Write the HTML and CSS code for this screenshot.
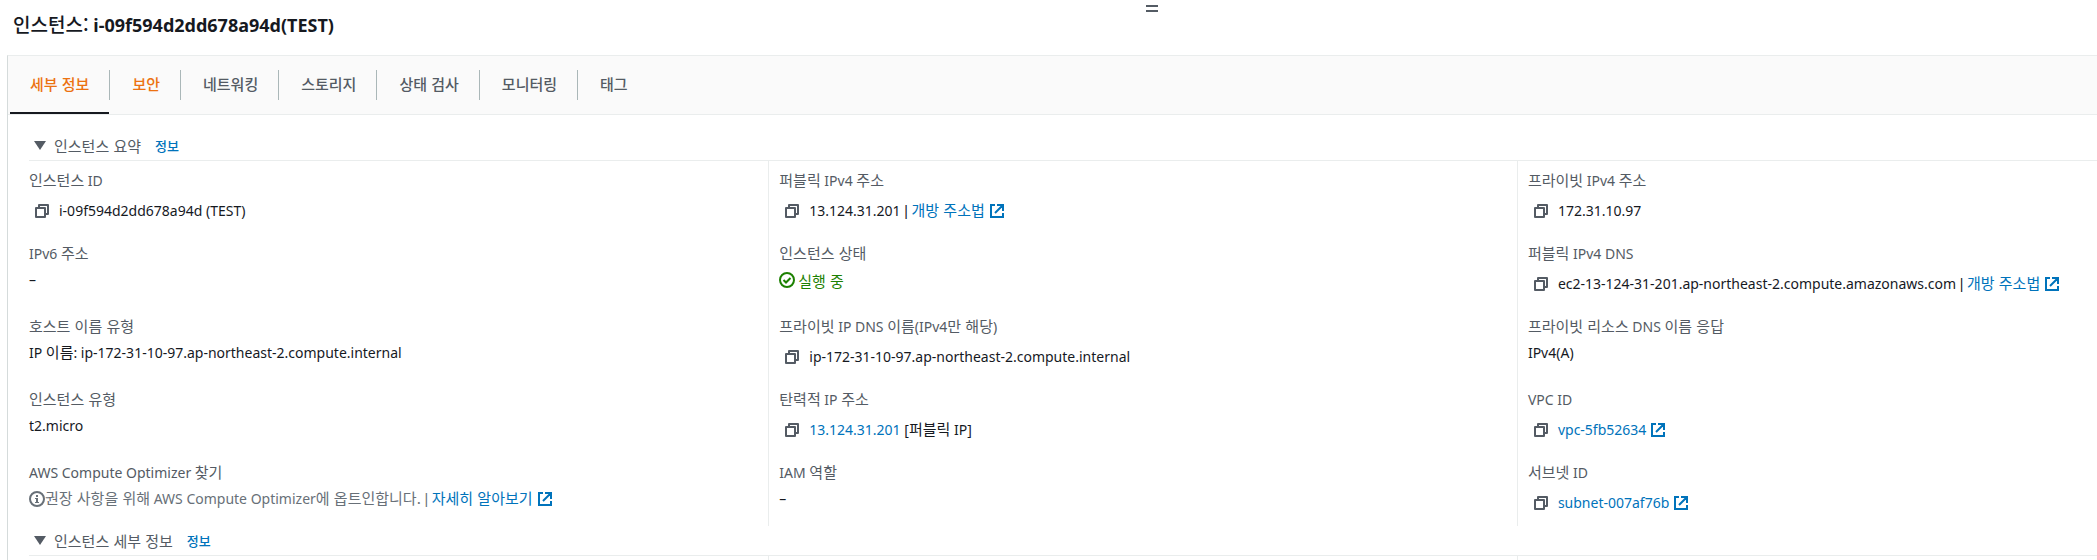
FILE: index.html
```html
<!DOCTYPE html>
<html lang="ko">

<head>
    <meta charset="UTF-8">
    <meta name="viewport" content="width=device-width, initial-scale=1.0">
    <title>인스턴스: i-09f594d2dd678a94d(TEST)</title>
    <link rel="stylesheet" href="styles.css">
</head>

<body>
    <svg class="sprite" aria-hidden="true">
        <symbol id="copy" viewBox="0 0 14 14">
            <path d="M1 4h9v9H1z M4 4V1h9v9h-3" fill="none" stroke="currentColor" stroke-width="2" stroke-linejoin="round" />
        </symbol>
        <symbol id="external" viewBox="0 0 14 14">
            <path d="M5 1H1v12h12V9 M7 1h6v6 M13 1L5 9" fill="none" stroke="currentColor" stroke-width="2" />
        </symbol>
        <symbol id="check" viewBox="0 0 16 16">
            <circle cx="8" cy="8" r="7" fill="none" stroke="currentColor" stroke-width="2" />
            <path d="M4.5 8l2.5 2.5 4.5-4.5" fill="none" stroke="currentColor" stroke-width="2" />
        </symbol>
        <symbol id="info" viewBox="0 0 16 16">
            <circle cx="8" cy="8" r="7" fill="none" stroke="currentColor" stroke-width="2" />
            <path d="M7 4h2v2H7z M6 7h3v4h1v1H6v-1h1V8H6z" fill="currentColor" />
        </symbol>
    </svg>

    <header class="header">
        <h1><span class="ko">인스턴스:</span> i-09f594d2dd678a94d(TEST)</h1>
        <button type="button" class="handle" aria-label="패널 크기 조정"></button>
    </header>

    <main class="panel">
        <nav>
            <ul class="tabs">
                <li><button type="button" class="tab active">세부 정보</button></li>
                <li><button type="button" class="tab new">보안</button></li>
                <li><button type="button" class="tab">네트워킹</button></li>
                <li><button type="button" class="tab">스토리지</button></li>
                <li><button type="button" class="tab">상태 검사</button></li>
                <li><button type="button" class="tab">모니터링</button></li>
                <li><button type="button" class="tab">태그</button></li>
            </ul>
        </nav>

        <section class="section">
            <div class="section-header">
                <button type="button" class="toggle"><span class="arrow"></span>인스턴스 요약</button>
                <a href="#" class="info-link">정보</a>
            </div>
            <div class="columns">
                <dl class="column">
                    <div class="field">
                        <dt><span class="ko">인스턴스</span> ID</dt>
                        <dd class="copyable">
                            <button type="button" class="copy" aria-label="복사"><svg class="icon"><use href="#copy" /></svg></button>
                            <span>i-09f594d2dd678a94d (TEST)</span>
                        </dd>
                    </div>
                    <div class="field">
                        <dt>IPv6 <span class="ko">주소</span></dt>
                        <dd>–</dd>
                    </div>
                    <div class="field">
                        <dt><span class="ko">호스트 이름 유형</span></dt>
                        <dd><span>IP <span class="ko">이름</span>: ip-172-31-10-97.ap-northeast-2.compute.internal</span></dd>
                    </div>
                    <div class="field">
                        <dt><span class="ko">인스턴스 유형</span></dt>
                        <dd>t2.micro</dd>
                    </div>
                    <div class="field">
                        <dt>AWS Compute Optimizer <span class="ko">찾기</span></dt>
                        <dd class="muted">
                            <svg class="icon-lg"><use href="#info" /></svg>
                            <span><span class="ko">권장 사항을 위해</span> AWS Compute Optimizer<span class="ko">에 옵트인합니다.</span> <span class="sep">|</span> <a href="#" class="ko">자세히 알아보기</a></span>
                            <svg class="icon external"><use href="#external" /></svg>
                        </dd>
                    </div>
                </dl>

                <dl class="column">
                    <div class="field">
                        <dt><span class="ko">퍼블릭</span> IPv4 <span class="ko">주소</span></dt>
                        <dd class="copyable">
                            <button type="button" class="copy" aria-label="복사"><svg class="icon"><use href="#copy" /></svg></button>
                            <span>13.124.31.201 <span class="sep">|</span> <a href="#" class="ko">개방 주소법</a></span>
                            <svg class="icon external"><use href="#external" /></svg>
                        </dd>
                    </div>
                    <div class="field">
                        <dt><span class="ko">인스턴스 상태</span></dt>
                        <dd class="running">
                            <svg class="icon-lg"><use href="#check" /></svg>
                            <span class="ko">실행 중</span>
                        </dd>
                    </div>
                    <div class="field">
                        <dt><span class="ko">프라이빗</span> IP DNS <span class="ko">이름</span>(IPv4<span class="ko">만 해당</span>)</dt>
                        <dd class="copyable">
                            <button type="button" class="copy" aria-label="복사"><svg class="icon"><use href="#copy" /></svg></button>
                            <span>ip-172-31-10-97.ap-northeast-2.compute.internal</span>
                        </dd>
                    </div>
                    <div class="field">
                        <dt><span class="ko">탄력적</span> IP <span class="ko">주소</span></dt>
                        <dd class="copyable">
                            <button type="button" class="copy" aria-label="복사"><svg class="icon"><use href="#copy" /></svg></button>
                            <span><a href="#">13.124.31.201</a> [<span class="ko">퍼블릭</span> IP]</span>
                        </dd>
                    </div>
                    <div class="field">
                        <dt>IAM <span class="ko">역할</span></dt>
                        <dd>–</dd>
                    </div>
                </dl>

                <dl class="column">
                    <div class="field">
                        <dt><span class="ko">프라이빗</span> IPv4 <span class="ko">주소</span></dt>
                        <dd class="copyable">
                            <button type="button" class="copy" aria-label="복사"><svg class="icon"><use href="#copy" /></svg></button>
                            <span>172.31.10.97</span>
                        </dd>
                    </div>
                    <div class="field">
                        <dt><span class="ko">퍼블릭</span> IPv4 DNS</dt>
                        <dd class="copyable">
                            <button type="button" class="copy" aria-label="복사"><svg class="icon"><use href="#copy" /></svg></button>
                            <span>ec2-13-124-31-201.ap-northeast-2.compute.amazonaws.com <span class="sep">|</span> <a href="#" class="ko">개방 주소법</a></span>
                            <svg class="icon external"><use href="#external" /></svg>
                        </dd>
                    </div>
                    <div class="field">
                        <dt><span class="ko">프라이빗 리소스</span> DNS <span class="ko">이름 응답</span></dt>
                        <dd>IPv4(A)</dd>
                    </div>
                    <div class="field">
                        <dt>VPC ID</dt>
                        <dd class="copyable">
                            <button type="button" class="copy" aria-label="복사"><svg class="icon"><use href="#copy" /></svg></button>
                            <a href="#">vpc-5fb52634</a>
                            <svg class="icon external"><use href="#external" /></svg>
                        </dd>
                    </div>
                    <div class="field">
                        <dt><span class="ko">서브넷</span> ID</dt>
                        <dd class="copyable">
                            <button type="button" class="copy" aria-label="복사"><svg class="icon"><use href="#copy" /></svg></button>
                            <a href="#">subnet-007af76b</a>
                            <svg class="icon external"><use href="#external" /></svg>
                        </dd>
                    </div>
                </dl>
            </div>
        </section>

        <section class="section last">
            <div class="section-header">
                <button type="button" class="toggle"><span class="arrow"></span>인스턴스 세부 정보</button>
                <a href="#" class="info-link">정보</a>
            </div>
            <div class="columns">
                <div class="column-empty"></div>
                <div class="column-empty"></div>
                <div class="column-empty"></div>
            </div>
        </section>
    </main>
</body>

</html>
```

FILE: styles.css
```css
* {
    padding: 0;
    margin: 0;
    box-sizing: border-box;
}

body {
    min-height: 100vh;
    display: flex;
    flex-direction: column;
    font-family: "Noto Sans", "Noto Sans CJK KR", sans-serif;
    font-size: 14px;
    line-height: 22px;
    color: #16191f;
    background-color: #fff;
}

button {
    border: none;
    background: none;
    font: inherit;
    color: inherit;
    cursor: pointer;
}

a {
    color: #0073bb;
    text-decoration: none;
}

a:hover {
    text-decoration: underline;
}

ul {
    list-style: none;
}

/* Hangul is set one size up so it sits evenly next to the Latin text */
.ko {
    font-family: "Noto Sans CJK KR", sans-serif;
    font-size: 15px;
    line-height: 1;
}

.sep {
    font-family: "Liberation Sans", sans-serif;
    line-height: 1;
}

.sprite {
    display: none;
}

.icon {
    width: 14px;
    height: 14px;
    flex: none;
}

.icon-lg {
    width: 16px;
    height: 16px;
    flex: none;
}

.header {
    position: relative;
    height: 55px;
    padding: 14px 13px;
}

.header h1 {
    font-size: 18px;
    font-weight: 700;
}

.header .ko {
    font-size: 19px;
    font-weight: 500;
}

.handle {
    position: absolute;
    top: 5px;
    left: 55%;
    width: 12px;
    height: 7px;
    margin-left: -7px;
    border-top: 2px solid #545b64;
    border-bottom: 2px solid #545b64;
    cursor: row-resize;
}

.panel {
    flex: 1;
    display: flex;
    flex-direction: column;
    margin-left: 7px;
    border-top: 1px solid #eaeded;
    border-left: 1px solid #d5dbdb;
}

.tabs {
    display: flex;
    gap: 2px;
    padding-left: 2px;
    background-color: #fafafa;
    border-bottom: 1px solid #eaeded;
}

.tabs li {
    display: flex;
    align-items: center;
}

.tabs li:not(:last-child)::after {
    content: "";
    width: 1px;
    height: 30px;
    background-color: #aab7b8;
}

.tab {
    height: 58px;
    padding: 0 20px 2px;
    border-bottom: 2px solid transparent;
    border-top: 2px solid transparent;
    font-family: "Noto Sans CJK KR", sans-serif;
    font-size: 15px;
    font-weight: 500;
    color: #545b64;
}

.tab.new,
.tab.active,
.tab:hover {
    color: #ec7211;
}

.tab.active {
    border-bottom-color: #16191f;
}

.section {
    margin-left: 21px;
}

nav + .section {
    margin-top: 16px;
}

.section.last {
    flex: 1;
    display: flex;
    flex-direction: column;
}

.section.last .columns {
    flex: 1;
}

.section-header {
    height: 30px;
    display: flex;
    align-items: center;
    gap: 14px;
    padding-left: 5px;
    border-bottom: 1px solid #eaeded;
}

.toggle {
    display: flex;
    align-items: center;
    gap: 8px;
    font-family: "Noto Sans CJK KR", sans-serif;
    font-size: 15px;
    color: #545b64;
}

.arrow {
    border: 6px solid transparent;
    border-top: 9px solid #545b64;
    border-bottom: none;
}

.info-link {
    font-family: "Noto Sans CJK KR", sans-serif;
    font-size: 13px;
    font-weight: 500;
}

.columns {
    display: grid;
    grid-template-columns: 35.75% 36.2% 1fr;
}

.column {
    display: grid;
    grid-auto-rows: 64px;
    row-gap: 9px;
    padding-top: 9px;
}

.column + .column,
.column-empty + .column-empty {
    padding-left: 10px;
    border-left: 1px solid #eaeded;
}

.field {
    display: flex;
    flex-direction: column;
    gap: 4px;
    white-space: nowrap;
}

dt {
    height: 22px;
    color: #545b64;
}

dd {
    height: 22px;
    display: flex;
    align-items: center;
}

dd.copyable {
    height: 30px;
}

dd.muted {
    color: #687078;
}

dd.running {
    gap: 3px;
    color: #1d8102;
}

.copy {
    width: 30px;
    height: 30px;
    padding: 0 6px;
    display: flex;
    align-items: center;
    color: #545b64;
}

.external {
    margin-left: 5px;
    color: #0073bb;
}
```
